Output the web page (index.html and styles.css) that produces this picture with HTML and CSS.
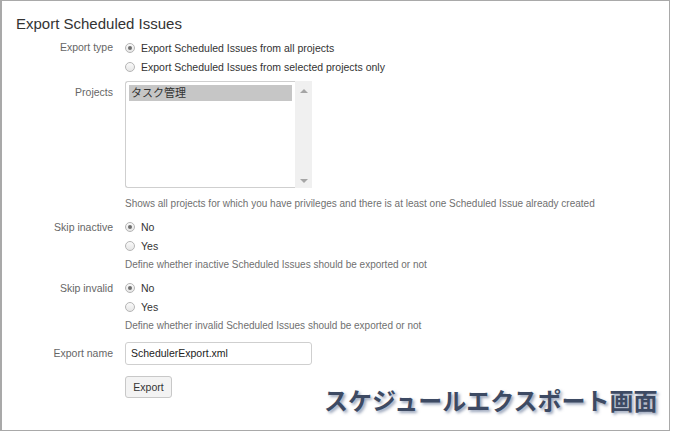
FILE: index.html
```html
<!DOCTYPE html>
<html lang="en">
<head>
    <meta charset="UTF-8">
    <title>Export Scheduled Issues</title>
    <link rel="stylesheet" href="styles.css">
</head>
<body>
    <div class="frame">
        <h2 class="title">Export Scheduled Issues</h2>
        <form class="export-form">
            <div class="row">
                <div class="label">Export type</div>
                <div class="field">
                    <div class="option"><span class="radio checked"></span>Export Scheduled Issues from all projects</div>
                    <div class="option"><span class="radio"></span>Export Scheduled Issues from selected projects only</div>
                </div>
            </div>

            <div class="row projects-row">
                <div class="label label-top">Projects</div>
                <div class="field">
                    <div class="listbox">
                        <div class="list-items">
                            <div class="list-item selected">タスク管理</div>
                        </div>
                        <div class="scrollbar">
                            <span class="arrow up"></span>
                            <span class="arrow down"></span>
                        </div>
                    </div>
                    <div class="help help-projects">Shows all projects for which you have privileges and there is at least one Scheduled Issue already created</div>
                </div>
            </div>

            <div class="row skip-row">
                <div class="label">Skip inactive</div>
                <div class="field">
                    <div class="option"><span class="radio checked"></span>No</div>
                    <div class="option"><span class="radio"></span>Yes</div>
                    <div class="help">Define whether inactive Scheduled Issues should be exported or not</div>
                </div>
            </div>

            <div class="row skip-row">
                <div class="label">Skip invalid</div>
                <div class="field">
                    <div class="option"><span class="radio checked"></span>No</div>
                    <div class="option"><span class="radio"></span>Yes</div>
                    <div class="help">Define whether invalid Scheduled Issues should be exported or not</div>
                </div>
            </div>

            <div class="row name-row">
                <div class="label">Export name</div>
                <div class="field">
                    <div class="text-input">SchedulerExport.xml</div>
                </div>
            </div>

            <div class="row button-row">
                <div class="label"></div>
                <div class="field">
                    <button type="button" class="btn">Export</button>
                </div>
            </div>
        </form>
        <div class="caption">スケジュールエクスポート画面</div>
    </div>
</body>
</html>
```

FILE: styles.css
```css
body {
    margin: 0;
    background-color: #fff;
    font-family: 'Liberation Sans', Arial, sans-serif;
    font-size: 10.5px;
    color: #333;
}
.frame {
    position: relative;
    box-sizing: border-box;
    width: 670px;
    height: 431px;
    border: 1px solid #a9a9a9;
    border-left-width: 2px;
    padding: 13px 14px 0;
}
.title {
    margin: 0;
    font-size: 15px;
    font-weight: normal;
    line-height: 20px;
    color: #333;
}
.export-form {
    margin-top: 4px;
}
.row {
    display: grid;
    grid-template-columns: 97px 1fr;
    column-gap: 12px;
}
.label {
    text-align: right;
    color: #666;
    line-height: 19px;
}
.label-top {
    line-height: 22px;
}
.option {
    display: flex;
    align-items: center;
    height: 19px;
}
.radio {
    box-sizing: border-box;
    width: 10px;
    height: 10px;
    margin: 0 6px 0 0;
    border: 1px solid #b5b5b5;
    border-radius: 50%;
    background: linear-gradient(#fafafa, #e6e6e6);
    display: flex;
    align-items: center;
    justify-content: center;
}
.radio.checked::after {
    content: "";
    width: 4px;
    height: 4px;
    border-radius: 50%;
    background-color: #6f6f6f;
}
.projects-row {
    margin-top: 5px;
}
.listbox {
    box-sizing: border-box;
    width: 187px;
    height: 107px;
    border: 1px solid #cfcfcf;
    border-right: none;
    border-radius: 3px 0 0 3px;
    display: flex;
}
.list-items {
    flex: 1;
    padding: 3px;
}
.list-item {
    height: 16px;
    line-height: 16px;
    padding-left: 2px;
    font-family: 'Liberation Sans', 'Noto Sans CJK JP', sans-serif;
    font-size: 11px;
}
.list-item.selected {
    background-color: #c6c6c6;
}
.scrollbar {
    width: 17px;
    background-color: #f0f0f0;
    display: flex;
    flex-direction: column;
    justify-content: space-between;
    align-items: center;
    padding: 8px 0 5px;
    margin: -1px 0;
}
.arrow {
    width: 0;
    height: 0;
    border-left: 4px solid transparent;
    border-right: 4px solid transparent;
}
.arrow.up {
    border-bottom: 4px solid #a5a5a5;
}
.arrow.down {
    border-top: 4px solid #a5a5a5;
}
.help {
    font-size: 10px;
    line-height: 15px;
    color: #707070;
    white-space: nowrap;
}
.help-projects {
    margin-top: 8px;
}
.skip-row {
    margin-top: 7px;
}
.skip-row .option {
    height: 18.5px;
}
.skip-row .help {
    margin-top: 2px;
}
.name-row {
    margin-top: 9px;
    align-items: center;
}
.text-input {
    box-sizing: border-box;
    width: 187px;
    height: 23px;
    line-height: 21px;
    border: 1px solid #cfcfcf;
    border-radius: 3px;
    padding-left: 5px;
    color: #222;
}
.button-row {
    margin-top: 11px;
}
.btn {
    box-sizing: border-box;
    height: 22px;
    width: 47px;
    padding: 0;
    font-family: 'Liberation Sans', Arial, sans-serif;
    font-size: 10.5px;
    color: #333;
    background-color: #f3f3f3;
    border: 1px solid #c8c8c8;
    border-radius: 3px;
}
.caption {
    position: absolute;
    left: 322px;
    top: 383px;
    font-family: 'Noto Sans CJK JP', sans-serif;
    font-size: 24px;
    font-weight: bold;
    line-height: 32px;
    color: #3d4a63;
    text-shadow: 2px 2px 3px rgba(70, 90, 130, 0.55);
}
```
